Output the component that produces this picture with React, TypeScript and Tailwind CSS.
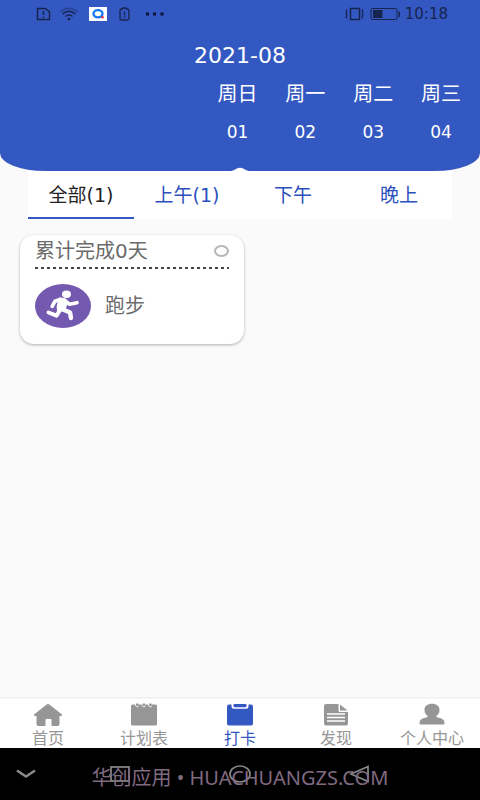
import { useState } from 'react'

type Day = { week: string; date: string }

const days: Day[] = [
  { week: '周日', date: '01' },
  { week: '周一', date: '02' },
  { week: '周二', date: '03' },
  { week: '周三', date: '04' },
]

const tabs = ['全部(1)', '上午(1)', '下午', '晚上']

const navItems = [
  { label: '首页', icon: HomeIcon },
  { label: '计划表', icon: PlanIcon },
  { label: '打卡', icon: ClipboardIcon },
  { label: '发现', icon: ArticleIcon },
  { label: '个人中心', icon: UserIcon },
]

function HomeIcon() {
  return (
    <svg width="30" height="24" viewBox="0 0 30 24" fill="currentColor">
      <path d="M14 1.2Q15 .6 16 1.2L29 11.6Q29.2 12.8 28 13H26.500V21Q26.500 23 24.500 23H18.500V17Q18.500 16 17.500 16H13.500Q12.500 16 12.500 17V23H5.500Q3.500 23 3.500 21V13H2Q.8 12.800 1 11.600Z" />
    </svg>
  )
}

function PlanIcon() {
  return (
    <svg width="30" height="24" viewBox="0 0 30 24" fill="currentColor">
      <path d="M3.500 1.500H26.500Q28 1.500 28 3V21Q28 22.500 26.500 22.500H3.500Q2 22.500 2 21V3Q2 1.500 3.500 1.500Z" />
      <path d="M6.500 0V2.500Q8.500 5.500 10 2.500M13 0V2.500Q15 5.500 16.500 2.500M19.500 0V2.500Q21.500 5.500 23 2.500" fill="none" stroke="#fff" strokeWidth="1" />
      <path d="M8.300 .5V2.800M14.800 .5V2.800M21.300 .5V2.800" stroke="currentColor" strokeWidth="2.400" />
    </svg>
  )
}

function ClipboardIcon() {
  return (
    <svg width="30" height="24" viewBox="0 0 30 24" fill="currentColor">
      <path d="M4 1.500H6.500V3.500Q6.500 5.700 9 5.700H21Q23.500 5.700 23.500 3.500V1.500H26Q28 1.500 28 3.500V20.500Q28 22.500 26 22.500H4Q2 22.500 2 20.500V3.500Q2 1.500 4 1.500Z" />
      <rect x="8.500" y="1" width="13" height="3.300" rx="1" />
    </svg>
  )
}

function ArticleIcon() {
  return (
    <svg width="30" height="24" viewBox="0 0 30 24" fill="currentColor">
      <path d="M5 1H17.500V7.500Q17.500 9 19 9H27V20.500Q27 22.500 25 22.500H5Q3 22.500 3 20.500V3Q3 1 5 1Z" />
      <path d="M19 1.500L26.500 7.500H19Z" />
      <path d="M6 11H24M6 14.500H24M6 18H24" stroke="#fff" strokeWidth="1.300" />
    </svg>
  )
}

function UserIcon() {
  return (
    <svg width="30" height="24" viewBox="0 0 30 24" fill="currentColor">
      <path d="M15 .8C19.500 .8 22.500 3.200 22.500 6.800C22.500 9.500 21.500 11.500 19.500 12.800V14Q20.500 14.600 23.500 15.200Q27.500 16.300 27.500 20V20.500Q27.500 21.500 26 21.500H4Q2.500 21.500 2.500 20.500V20Q2.500 16.300 6.500 15.200Q9.500 14.600 10.500 14V12.800C8.500 11.500 7.500 9.500 7.500 6.800C7.500 3.200 10.500 .8 15 .8Z" />
    </svg>
  )
}

function RunnerIcon() {
  return (
    <svg width="56" height="44" viewBox="0 0 56 44" className="shrink-0">
      <ellipse cx="28" cy="22" rx="28" ry="22" fill="#7459b0" />
      <g fill="none" stroke="#fff" strokeWidth="3.600" strokeLinecap="round" strokeLinejoin="round">
        <path d="M17.200 22.400L20 17.200L25.500 15.300L29.500 16L34.500 20.300L42 18.700" />
        <path d="M25 26L21.500 31.700L13.500 28.500" strokeWidth="4" />
        <path d="M28 25.500L35 28.500L36 34" strokeWidth="4.400" />
      </g>
      <path d="M24 14L30.500 15L32 20L29.500 26.500L23 27.500L22 23.500Z" fill="#fff" stroke="#fff" strokeLinejoin="round" />
      <ellipse cx="31.500" cy="10.300" rx="4.500" ry="3.700" fill="#fff" />
    </svg>
  )
}

function StatusBar() {
  return (
    <div className="flex h-7 items-center justify-between pr-8 pl-9 text-[#17244f]">
      <div className="flex items-center gap-2">
        <svg width="15" height="14" viewBox="0 0 15 14" fill="none" stroke="currentColor" strokeWidth="1.500">
          <path d="M1.500 1.500H9.500L13.500 5V12.500H1.500Z" />
          <path d="M7.500 4V8M7.500 9.500V11" />
        </svg>
        <svg width="20" height="14" viewBox="0 0 20 14" fill="none" stroke="currentColor" strokeWidth="1.500">
          <path d="M1 5Q10 -2.500 19 5" opacity=".4" />
          <path d="M3.500 7Q10 1.500 16.500 7M6.500 9.500Q10 6.500 13.500 9.500" />
          <ellipse cx="10" cy="12" rx="1.500" ry="1.200" fill="currentColor" stroke="none" />
        </svg>
        <svg width="24" height="14" viewBox="0 0 24 14">
          <path fill="#fff" d="M2 0H20V14H2Z" />
          <ellipse cx="11" cy="6.700" rx="4.500" ry="3.600" fill="none" stroke="#1677f0" strokeWidth="2.300" />
          <circle cx="15.500" cy="10.300" r="1.300" fill="#e5373c" />
        </svg>
        <svg width="11" height="14" viewBox="0 0 11 14" fill="none" stroke="currentColor" strokeWidth="1.300">
          <path d="M4 1H7L7.500 2H8.500Q10 2 10 4V11.500Q10 13 8.500 13H2.500Q1 13 1 11.500V4Q1 2 2.500 2H3.500Z" />
          <path d="M5.500 4.500V8.500M5.500 9.500V11" />
        </svg>
        <svg width="18" height="4" viewBox="0 0 18 4" fill="#0b1330" className="ml-2">
          <path d="M0 .5H3V3.500H0ZM7 .5H10V3.500H7ZM14.500 .5H17.500V3.500H14.500Z" />
        </svg>
      </div>
      <div className="flex items-center gap-1">
        <svg width="20" height="14" viewBox="0 0 20 14" fill="none" stroke="currentColor" strokeWidth="1.500">
          <path d="M5.500 1.500H14.500V12.500H5.500Z" />
          <path d="M2 2.500L1 4L2 5.500L1 7L2 8.500L1 10L2 11.500M18 2.500L17 4L18 5.500L17 7L18 8.500L17 10L18 11.500" strokeWidth="1.200" />
        </svg>
        <svg width="32" height="14" viewBox="0 0 32 14" fill="currentColor">
          <rect x="2" y="1.500" width="26" height="11" rx="1.500" fill="none" stroke="currentColor" />
          <path d="M4 3H13.500V11H4ZM29.500 4.500H31V10H29.500Z" />
        </svg>
        <span className="text-[15px] leading-5">10:18</span>
      </div>
    </div>
  )
}

function PlanCard() {
  const [done, setDone] = useState(false)

  return (
    <article className="ml-5 w-56 rounded-[14px] bg-white px-[15px] pb-4 text-[#6b6b6b] shadow-[0_1px_3px_rgba(0,0,0,0.3)]">
      <div className="flex h-8 items-center justify-between">
        <h2 className="text-xl leading-6">累计完成0天</h2>
        <input
          type="checkbox"
          aria-label="完成"
          checked={done}
          onChange={(e) => setDone(e.target.checked)}
          className="h-3 w-[15px] appearance-none rounded-[50%] border-2 border-[#b5b5b5] checked:bg-[#3458c2]"
        />
      </div>
      <div className="h-[2px] bg-[repeating-linear-gradient(90deg,#444_0_3px,transparent_3px_6px)]" />
      <div className="flex items-center gap-[14px] pt-[15px]">
        <RunnerIcon />
        <span className="text-xl">跑步</span>
      </div>
    </article>
  )
}

export default function App() {
  const [tab, setTab] = useState(0)
  const [nav, setNav] = useState(2)

  return (
    <div className="flex min-h-screen flex-col bg-[#fafafa] font-['DejaVu_Sans','Noto_Sans_CJK_SC',sans-serif]">
      <header className="relative rounded-b-[45px_18px] bg-[#3458c2] pb-[29px] text-white">
        <StatusBar />
        <h1 className="text-center text-[22px] leading-[56px]">2021-08</h1>
        <div className="grid grid-cols-7 pr-[5px] text-center">
          {days.map((day) => (
            <button key={day.date} className="first:col-start-4">
              <span className="block text-xl leading-5">{day.week}</span>
              <span className="mt-[18px] block text-[17px] leading-5">{day.date}</span>
            </button>
          ))}
        </div>
        <svg
          width="24"
          height="4"
          viewBox="0 0 24 4"
          className="absolute bottom-0 left-1/2 -translate-x-1/2"
        >
          <path d="M3 4Q6 3.500 8 2Q12 -.4 16 2Q18 3.500 21 4Z" fill="#fff" />
        </svg>
      </header>

      <main className="flex-1">
        <div role="tablist" className="mx-7 mb-4 grid grid-cols-4 bg-white">
          {tabs.map((label, i) => (
            <button
              key={label}
              role="tab"
              aria-selected={i === tab}
              onClick={() => setTab(i)}
              className={`h-12 border-b-2 pt-[2px] text-[19px] ${
                i === tab ? 'border-[#3458c2] text-[#222]' : 'border-transparent text-[#2c50be]'
              }`}
            >
              {label}
            </button>
          ))}
        </div>
        <PlanCard />
      </main>

      <nav className="grid grid-cols-5 border-t-2 border-[#f3f3f3] bg-white">
        {navItems.map(({ label, icon: Icon }, i) => (
          <button
            key={label}
            onClick={() => setNav(i)}
            className={`flex flex-col items-center pt-1 pb-px ${i === nav ? 'text-[#3458c2]' : 'text-[#969696]'}`}
          >
            <Icon />
            <span className="pt-1 text-base leading-4">{label}</span>
          </button>
        ))}
      </nav>

      <footer className="relative flex h-[52px] items-center bg-black text-[#8a8a8a]">
        <svg width="20" height="10" viewBox="0 0 20 10" fill="none" stroke="currentColor" strokeWidth="2.500" className="ml-4">
          <path d="M1 1.500L10 7.500L19 1.500" />
        </svg>
        <div className="flex flex-1 items-center justify-around pr-[60px] pl-6">
          <svg width="22" height="18" viewBox="0 0 22 18" fill="none" stroke="currentColor" strokeWidth="1.700">
            <rect x="2" y="2" width="18" height="14" />
          </svg>
          <svg width="22" height="18" viewBox="0 0 22 18" fill="none" stroke="currentColor" strokeWidth="1.700">
            <ellipse cx="11" cy="9" rx="10" ry="8" />
          </svg>
          <svg width="22" height="18" viewBox="0 0 22 18" fill="none" stroke="currentColor" strokeWidth="1.700">
            <path d="M19 1.500V16.500L2 9Z" />
          </svg>
        </div>
        <p className="absolute inset-x-0 top-4 text-center font-['Noto_Sans','Noto_Sans_CJK_SC',sans-serif] text-xl leading-7 whitespace-nowrap text-[#806a80]">
          华创应用 • HUACHUANGZS.COM
        </p>
      </footer>
    </div>
  )
}
